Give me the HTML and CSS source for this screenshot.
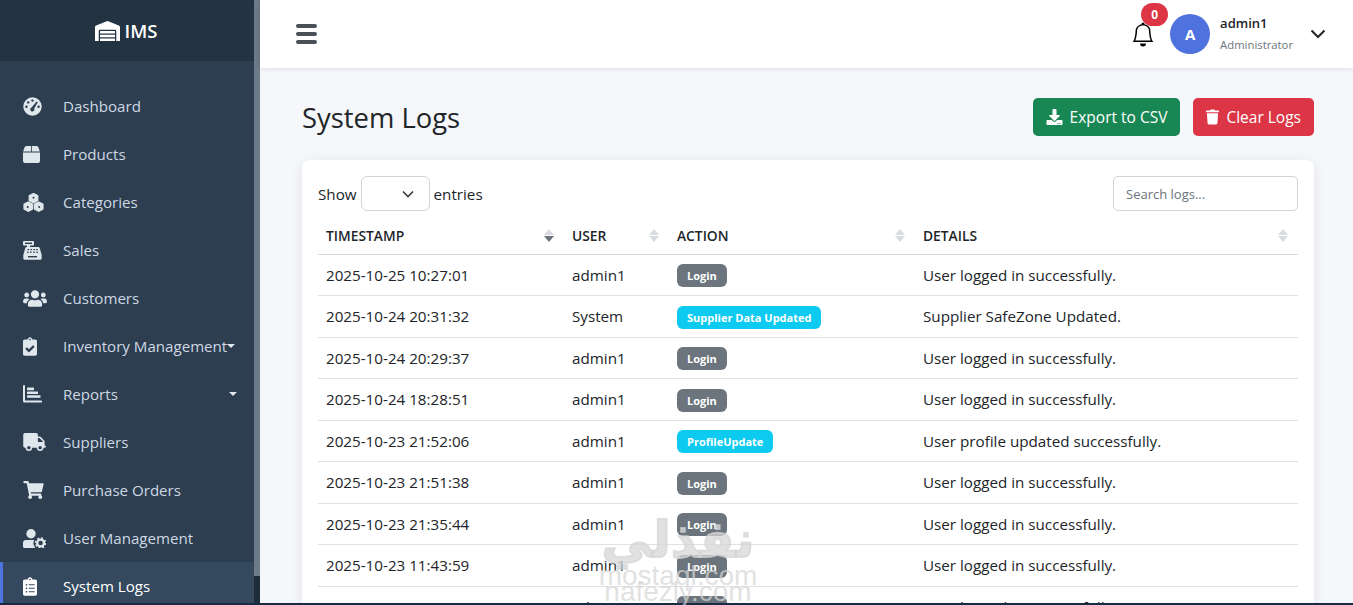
FILE: index.html
```html
<!DOCTYPE html>
<html lang="en">
<head>
  <meta charset="UTF-8">
  <title>System Logs - IMS</title>
  <link rel="stylesheet" href="styles.css">
</head>
<body>

  <div class="app">
    <aside class="sidebar">
      <div class="sidebar-inner">
        <div class="brand">
          <svg class="brand-icon" viewBox="0 0 640 512"><path d="M504 352H136.4c-4.4 0-8 3.6-8 8l-.1 48c0 4.4 3.6 8 8 8H504c4.4 0 8-3.6 8-8v-48c0-4.4-3.6-8-8-8zm0 96H136.1c-4.4 0-8 3.6-8 8l-.1 48c0 4.4 3.6 8 8 8h368c4.4 0 8-3.6 8-8v-48c0-4.4-3.6-8-8-8zm0-192H136.6c-4.4 0-8 3.6-8 8l-.1 48c0 4.4 3.6 8 8 8H504c4.4 0 8-3.6 8-8v-48c0-4.4-3.6-8-8-8zm106.5-139L338.4 3.7a48.15 48.15 0 0 0-36.9 0L29.5 117C11.7 124.5 0 141.9 0 161.3V504c0 4.4 3.6 8 8 8h80c4.4 0 8-3.6 8-8V256c0-17.6 14.6-32 32.6-32h382.8c18 0 32.6 14.4 32.6 32v248c0 4.4 3.6 8 8 8h80c4.4 0 8-3.6 8-8V161.3c0-19.4-11.7-36.8-29.5-44.3z"/></svg>
          <span>IMS</span>
        </div>
        <nav class="side-nav">
          <a href="#" class="nav-link">
            <span class="nav-icon"><svg width="19" height="19" viewBox="0 0 19 19"><circle cx="9.5" cy="9.5" r="9.2"/><g fill="#2c3e50"><circle cx="9.5" cy="3.6" r="1.2"/><circle cx="5.2" cy="5.4" r="1.2"/><circle cx="3.4" cy="9.7" r="1.2"/><circle cx="15.6" cy="9.7" r="1.2"/><path d="M13.6 4.4l1.2.8-3.6 6.2a2.1 2.1 0 1 1-2.6-1z"/></g></svg></span>
            Dashboard
          </a>
          <a href="#" class="nav-link">
            <span class="nav-icon"><svg width="17" height="17" viewBox="0 0 17 17"><path d="M3.2 0h4.9v5.6H.1L1.5 1.4A2 2 0 0 1 3.2 0zM8.9 0h4.9a2 2 0 0 1 1.7 1.4l1.4 4.2H8.9zM0 6.4h17v8.5a2 2 0 0 1-2 2H2a2 2 0 0 1-2-2z"/></svg></span>
            Products
          </a>
          <a href="#" class="nav-link">
            <span class="nav-icon"><svg width="21" height="19" viewBox="0 0 21 19"><g stroke="#dfe6ec" stroke-width="2" stroke-linejoin="round"><path d="M10.5 1l3.9 2v4.400l-3.900 2-3.900-2V3z"/><path d="M5.300 9.400l3.900 2v4.400l-3.900 2.200-3.900-2.200v-4.400z"/><path d="M15.700 9.400l3.900 2v4.400l-3.900 2.200-3.900-2.200v-4.400z"/></g><g fill="#2c3e50"><circle cx="10.500" cy="4.800" r="1"/><circle cx="4.700" cy="14" r="1"/><circle cx="16.200" cy="14" r="1"/></g></svg></span>
            Categories
          </a>
          <a href="#" class="nav-link">
            <span class="nav-icon"><svg width="19" height="19" viewBox="0 0 19 19"><path d="M1 0h9a1 1 0 0 1 1 1v2.600a1 1 0 0 1-1 1H7V6h8.200a1.600 1.600 0 0 1 1.600 1.300L18.700 14v3.200a1.600 1.600 0 0 1-1.600 1.600H1.900a1.600 1.600 0 0 1-1.600-1.600V14L2.200 7.300A1.600 1.600 0 0 1 3.800 6H4V4.600H1a1 1 0 0 1-1-1V1a1 1 0 0 1 1-1z"/><g fill="#2c3e50"><rect x="2" y="1.600" width="7" height="1.400"/><rect x="4.500" y="8" width="1.600" height="1.200"/><rect x="7.500" y="8" width="1.600" height="1.200"/><rect x="10.500" y="8" width="1.600" height="1.200"/><rect x="13.200" y="8" width="1.600" height="1.200"/><rect x="4" y="10.600" width="1.600" height="1.200"/><rect x="7" y="10.600" width="1.600" height="1.200"/><rect x="10.200" y="10.600" width="1.600" height="1.200"/><rect x="13.400" y="10.600" width="1.600" height="1.200"/><rect x="5" y="15" width="9" height="1.400"/></g></svg></span>
            Sales
          </a>
          <a href="#" class="nav-link">
            <span class="nav-icon"><svg width="24" height="19" viewBox="0 0 640 512"><path d="M96 224c35.300 0 64-28.700 64-64s-28.700-64-64-64-64 28.700-64 64 28.700 64 64 64zm448 0c35.300 0 64-28.700 64-64s-28.700-64-64-64-64 28.700-64 64 28.700 64 64 64zm32 32h-64c-17.600 0-33.500 7.100-45.100 18.600 40.300 22.100 68.900 62 75.100 109.400h66c17.700 0 32-14.300 32-32v-32c0-35.300-28.700-64-64-64zm-256 0c61.900 0 112-50.100 112-112S381.900 32 320 32 208 82.100 208 144s50.100 112 112 112zm76.800 32h-8.300c-20.800 10-43.900 16-68.500 16s-47.600-6-68.500-16h-8.300C179.600 288 128 339.600 128 403.200V432c0 26.500 21.500 48 48 48h288c26.500 0 48-21.500 48-48v-28.800c0-63.600-51.600-115.200-115.200-115.200zm-223.700-13.400C161.500 263.100 145.600 256 128 256H64c-35.300 0-64 28.700-64 64v32c0 17.700 14.300 32 32 32h65.900c6.300-47.400 34.900-87.300 75.200-109.400z"/></svg></span>
            Customers
          </a>
          <a href="#" class="nav-link">
            <span class="nav-icon"><svg width="14" height="19" viewBox="0 0 384 512"><path d="M336 64h-80c0-35.300-28.700-64-64-64s-64 28.700-64 64H48C21.500 64 0 85.500 0 112v352c0 26.500 21.500 48 48 48h288c26.500 0 48-21.500 48-48V112c0-26.500-21.500-48-48-48zM192 40c13.300 0 24 10.700 24 24s-10.700 24-24 24-24-10.700-24-24 10.700-24 24-24zm121.200 231.800l-143 141.800c-4.700 4.700-12.300 4.600-17-.1l-82.600-83.300c-4.700-4.700-4.600-12.300.1-17L99.100 285c4.700-4.700 12.300-4.600 17 .1l46 46.400 106-105.200c4.700-4.700 12.300-4.600 17 .1l28.200 28.400c4.700 4.800 4.600 12.300-.1 17z"/></svg></span>
            Inventory Management<span class="caret caret-tight"></span>
          </a>
          <a href="#" class="nav-link">
            <span class="nav-icon"><svg width="19" height="18" viewBox="0 0 19 18"><path d="M0 1a1 1 0 0 1 2 0v14.400h16a1.100 1.100 0 0 1 0 2.200H1.600A1.600 1.600 0 0 1 0 16z"/><rect x="4" y="2.600" width="7" height="2.600" rx=".6"/><rect x="4" y="6.400" width="11" height="2.600" rx=".6"/><rect x="4" y="10.200" width="13.500" height="2.600" rx=".6"/></svg></span>
            Reports<span class="caret"></span>
          </a>
          <a href="#" class="nav-link">
            <span class="nav-icon"><svg width="23" height="18" viewBox="0 0 640 512"><path d="M624 352h-16V243.900c0-12.700-5.100-24.900-14.100-33.900L494 110.100c-9-9-21.200-14.100-33.900-14.100H416V48c0-26.500-21.500-48-48-48H48C21.500 0 0 21.500 0 48v320c0 26.500 21.500 48 48 48h16c0 53 43 96 96 96s96-43 96-96h128c0 53 43 96 96 96s96-43 96-96h48c8.800 0 16-7.200 16-16v-32c0-8.800-7.200-16-16-16zM160 464c-26.500 0-48-21.500-48-48s21.500-48 48-48 48 21.500 48 48-21.500 48-48 48zm320 0c-26.500 0-48-21.500-48-48s21.500-48 48-48 48 21.500 48 48-21.500 48-48 48zm80-208H416V144h44.100l99.900 99.900V256z"/></svg></span>
            Suppliers
          </a>
          <a href="#" class="nav-link">
            <span class="nav-icon"><svg width="21" height="18" viewBox="0 0 576 512"><path d="M528.120 301.319l47.273-208C578.806 78.301 567.391 64 551.990 64H159.208l-9.166-44.810C147.758 8.021 137.930 0 126.529 0H24C10.745 0 0 10.745 0 24v16c0 13.255 10.745 24 24 24h69.883l70.248 343.435C147.325 417.100 136 435.222 136 456c0 30.928 25.072 56 56 56s56-25.072 56-56c0-15.674-6.447-29.835-16.824-40h209.647C430.447 426.165 424 440.326 424 456c0 30.928 25.072 56 56 56s56-25.072 56-56c0-22.172-12.888-41.332-31.579-50.405l5.517-24.276c3.413-15.018-8.002-29.319-23.403-29.319H218.117l-6.545-32h293.145c11.206 0 20.920-7.754 23.403-18.681z"/></svg></span>
            Purchase Orders
          </a>
          <a href="#" class="nav-link">
            <span class="nav-icon"><svg width="23" height="19" viewBox="0 0 23 19"><circle cx="8" cy="4.700" r="4.700"/><path d="M3 11h8.200a7 7 0 0 0 1 7.600l-.2.4H1.600A1.600 1.600 0 0 1 0 17.400V14a3 3 0 0 1 3-3z"/><circle cx="17.600" cy="14" r="3.400" fill="none" stroke="#dfe6ec" stroke-width="2.400"/><circle cx="17.600" cy="14" r="5" fill="none" stroke="#dfe6ec" stroke-width="1.600" stroke-dasharray="2 1.900"/></svg></span>
            User Management
          </a>
          <a href="#" class="nav-link active">
            <span class="nav-icon"><svg width="14" height="19" viewBox="0 0 384 512"><path d="M336 64h-80c0-35.300-28.700-64-64-64s-64 28.700-64 64H48C21.500 64 0 85.500 0 112v352c0 26.500 21.500 48 48 48h288c26.500 0 48-21.500 48-48V112c0-26.500-21.500-48-48-48zM96 424c-13.300 0-24-10.700-24-24s10.700-24 24-24 24 10.700 24 24-10.700 24-24 24zm0-96c-13.300 0-24-10.700-24-24s10.700-24 24-24 24 10.700 24 24-10.700 24-24 24zm0-96c-13.300 0-24-10.700-24-24s10.700-24 24-24 24 10.700 24 24-10.700 24-24 24zm96-192c13.300 0 24 10.700 24 24s-10.700 24-24 24-24-10.700-24-24 10.700-24 24-24zm128 368c0 4.400-3.600 8-8 8H168c-4.400 0-8-3.600-8-8v-16c0-4.400 3.600-8 8-8h144c4.400 0 8 3.600 8 8v16zm0-96c0 4.400-3.600 8-8 8H168c-4.400 0-8-3.600-8-8v-16c0-4.400 3.600-8 8-8h144c4.400 0 8 3.600 8 8v16zm0-96c0 4.400-3.600 8-8 8H168c-4.400 0-8-3.600-8-8v-16c0-4.400 3.600-8 8-8h144c4.400 0 8 3.600 8 8v16z"/></svg></span>
            System Logs
          </a>
        </nav>
      </div>
      <div class="side-scroll"><div class="side-thumb"></div></div>
    </aside>

    <div class="main">
      <header class="topbar">
        <button class="menu-toggle"><span></span><span></span><span></span></button>
        <div class="topbar-right">
          <div class="bell">
            <svg width="24" height="25" viewBox="0 0 16 16"><path d="M8 16a2 2 0 0 0 2-2H6a2 2 0 0 0 2 2zM8 1.918l-.797.161A4.002 4.002 0 0 0 4 6c0 .628-.134 2.197-.459 3.742-.16.767-.376 1.566-.663 2.258h10.244c-.287-.692-.502-1.490-.663-2.258C12.134 8.197 12 6.628 12 6a4.002 4.002 0 0 0-3.203-3.920L8 1.917zM14.220 12c.223.447.481.801.78 1H1c.299-.199.557-.553.78-1C2.680 10.200 3 6.880 3 6c0-2.420 1.720-4.440 4.005-4.901a1 1 0 1 1 1.990 0A5.002 5.002 0 0 1 13 6c0 .880.320 4.200 1.220 6z"/></svg>
            <span class="bell-badge">0</span>
          </div>
          <div class="avatar">A</div>
          <div class="user-info">
            <div class="user-name">admin1</div>
            <div class="user-role">Administrator</div>
          </div>
          <svg class="user-chevron" width="16" height="10" viewBox="0 0 16 10"><path d="M1.500 1.500L8 8l6.500-6.500" fill="none" stroke="#212529" stroke-width="2"/></svg>
        </div>
      </header>

      <div class="content">
        <div class="page-head">
          <h1>System Logs</h1>
          <div class="page-actions">
            <button class="btn btn-green">
              <svg width="17" height="16" viewBox="0 0 512 512"><path d="M216 0h80c13.300 0 24 10.700 24 24v168h87.700c17.800 0 26.700 21.500 14.100 34.100L269.700 378.300c-7.500 7.500-19.800 7.500-27.300 0L90.100 226.100c-12.600-12.600-3.700-34.100 14.100-34.100H192V24c0-13.300 10.700-24 24-24zm296 376v112c0 13.300-10.700 24-24 24H24c-13.300 0-24-10.700-24-24V376c0-13.300 10.700-24 24-24h146.700l49 49c20.100 20.100 52.500 20.100 72.600 0l49-49H488c13.300 0 24 10.700 24 24zm-124 88c0-11-9-20-20-20s-20 9-20 20 9 20 20 20 20-9 20-20zm64 0c0-11-9-20-20-20s-20 9-20 20 9 20 20 20 20-9 20-20z"/></svg>
              Export to CSV
            </button>
            <button class="btn btn-red">
              <svg width="13" height="16" viewBox="0 0 448 512"><path d="M432 32H312l-9.400-18.700A24 24 0 0 0 281.100 0H166.800a23.720 23.720 0 0 0-21.400 13.300L136 32H16A16 16 0 0 0 0 48v32a16 16 0 0 0 16 16h416a16 16 0 0 0 16-16V48a16 16 0 0 0-16-16zM53.200 467a48 48 0 0 0 47.900 45h245.800a48 48 0 0 0 47.900-45L416 128H32z"/></svg>
              Clear Logs
            </button>
          </div>
        </div>

        <div class="card">
          <div class="table-tools">
            <div class="show-entries">
              Show
              <div class="entries-select"><svg width="12" height="8" viewBox="0 0 12 8"><path d="M1 1.500l5 5 5-5" fill="none" stroke="#343a40" stroke-width="1.600"/></svg></div>
              entries
            </div>
            <input class="search" type="text" placeholder="Search logs...">
          </div>

          <table class="log-table">
            <colgroup>
              <col class="col-time"><col class="col-user"><col class="col-action"><col>
            </colgroup>
            <thead>
              <tr>
                <th><div class="th-wrap">Timestamp<span class="sort sort-down"></span></div></th>
                <th><div class="th-wrap">User<span class="sort"></span></div></th>
                <th><div class="th-wrap">Action<span class="sort"></span></div></th>
                <th><div class="th-wrap">Details<span class="sort"></span></div></th>
              </tr>
            </thead>
            <tbody>
              <tr><td>2025-10-25 10:27:01</td><td>admin1</td><td><span class="badge badge-grey">Login</span></td><td>User logged in successfully.</td></tr>
              <tr><td>2025-10-24 20:31:32</td><td>System</td><td><span class="badge badge-cyan">Supplier Data Updated</span></td><td>Supplier SafeZone Updated.</td></tr>
              <tr><td>2025-10-24 20:29:37</td><td>admin1</td><td><span class="badge badge-grey">Login</span></td><td>User logged in successfully.</td></tr>
              <tr><td>2025-10-24 18:28:51</td><td>admin1</td><td><span class="badge badge-grey">Login</span></td><td>User logged in successfully.</td></tr>
              <tr><td>2025-10-23 21:52:06</td><td>admin1</td><td><span class="badge badge-cyan">ProfileUpdate</span></td><td>User profile updated successfully.</td></tr>
              <tr><td>2025-10-23 21:51:38</td><td>admin1</td><td><span class="badge badge-grey">Login</span></td><td>User logged in successfully.</td></tr>
              <tr><td>2025-10-23 21:35:44</td><td>admin1</td><td><span class="badge badge-grey">Login</span></td><td>User logged in successfully.</td></tr>
              <tr><td>2025-10-23 11:43:59</td><td>admin1</td><td><span class="badge badge-grey">Login</span></td><td>User logged in successfully.</td></tr>
              <tr><td>2025-10-23 11:42:53</td><td>admin1</td><td><span class="badge badge-grey">Login</span></td><td>User logged in successfully.</td></tr>
            </tbody>
          </table>
        </div>
      </div>
    </div>
  </div>
  <div class="bottom-line"></div>

  <div class="watermark">
    <div class="wm-arabic">نفذلي</div>
    <div class="wm-line">mostaql.com</div>
    <div class="wm-line wm-line2">nafezly.com</div>
  </div>

</body>
</html>
```

FILE: styles.css
```css
* {
  margin: 0;
  padding: 0;
  box-sizing: border-box;
}

body {
  height: 605px;
  overflow: hidden;
  background-color: #f5f7fa;
  color: #212529;
  font-family: "Open Sans", "Liberation Sans", sans-serif;
  font-size: 15.2px;
  display: flex;
  flex-direction: column;
}

.app {
  display: flex;
  height: 603px;
  overflow: hidden;
}

.bottom-line {
  height: 2px;
  background-color: #1b2a44;
}

/* sidebar */
.sidebar {
  width: 260px;
  flex-shrink: 0;
  display: flex;
  background-color: #2c3e50;
}

.sidebar-inner {
  flex: 1;
  min-width: 0;
  overflow: hidden;
}

.side-scroll {
  width: 6px;
  background-color: #1f2d3a;
}

.side-thumb {
  height: 576px;
  background-color: #6c7a89;
}

.brand {
  height: 61px;
  background-color: #233342;
  color: #fff;
  display: flex;
  justify-content: center;
  align-items: center;
  gap: 5px;
  font-size: 18.5px;
  font-weight: 600;
  padding-right: 2px;
}

.brand-icon {
  width: 25px;
  height: 20px;
  fill: #fff;
}

.side-nav {
  padding-top: 21px;
}

.nav-link {
  height: 48px;
  display: flex;
  align-items: center;
  padding-left: 23px;
  color: #cfd8e3;
  font-size: 15.1px;
  text-decoration: none;
  white-space: nowrap;
}

.nav-link.active {
  background-color: #34495e;
  color: #fff;
  border-left: 3px solid #4e73df;
  padding-left: 20px;
}

.nav-icon {
  width: 40px;
  flex-shrink: 0;
  display: flex;
  align-items: center;
}

.nav-icon svg {
  fill: #dfe6ec;
}

.active .nav-icon svg {
  fill: #fff;
}

.caret {
  width: 0;
  height: 0;
  margin-left: auto;
  margin-right: 17px;
  border-left: 4.5px solid transparent;
  border-right: 4.5px solid transparent;
  border-top: 4.5px solid #dfe6ec;
}

.caret-tight {
  margin-left: 0;
}

/* top bar */
.main {
  flex: 1;
  min-width: 0;
}

.topbar {
  height: 68px;
  background-color: #fff;
  box-shadow: 0 1px 5px rgba(0, 0, 0, 0.1);
  display: flex;
  justify-content: space-between;
  align-items: center;
  padding: 0 27px 0 36px;
  position: relative;
}

.menu-toggle {
  width: 21px;
  border: none;
  background: none;
  display: flex;
  flex-direction: column;
  gap: 4.5px;
}

.menu-toggle span {
  height: 3.5px;
  border-radius: 2px;
  background-color: #495057;
}

.topbar-right {
  display: flex;
  align-items: center;
}

.bell {
  position: relative;
  width: 24px;
  height: 25px;
  margin-right: 15px;
}

.bell-badge {
  position: absolute;
  top: -19px;
  left: 10px;
  width: 27px;
  height: 23px;
  border-radius: 12px;
  background-color: #dc3545;
  color: #fff;
  font-size: 12px;
  font-weight: 700;
  text-align: center;
  line-height: 23px;
}

.avatar {
  width: 40px;
  height: 40px;
  border-radius: 50%;
  background-color: #4e73df;
  color: #fff;
  font-size: 15px;
  font-weight: 700;
  display: flex;
  justify-content: center;
  align-items: center;
  margin-right: 10px;
}

.user-name {
  font-size: 13px;
  font-weight: 600;
  line-height: 21px;
}

.user-role {
  font-size: 11.3px;
  color: #6c757d;
  line-height: 21px;
}

.user-chevron {
  margin-left: 17px;
}

/* page content */
.content {
  padding: 30px 39px 0 42px;
}

.page-head {
  display: flex;
  justify-content: space-between;
  align-items: center;
  margin-bottom: 24px;
}

.page-head h1 {
  font-size: 27.4px;
  font-weight: 500;
}

.page-actions {
  display: flex;
  gap: 13px;
}

.btn {
  height: 38px;
  padding: 0 13px;
  border: none;
  border-radius: 5px;
  color: #fff;
  font-family: inherit;
  font-size: 15.5px;
  display: flex;
  align-items: center;
  gap: 7px;
}

.btn svg {
  fill: #fff;
}

.btn-green {
  background-color: #198754;
}

.btn-red {
  background-color: #dc3545;
}

.card {
  background-color: #fff;
  border-radius: 8px;
  box-shadow: 0 2px 14px rgba(0, 0, 0, 0.08);
  padding: 16px;
}

.table-tools {
  display: flex;
  justify-content: space-between;
  align-items: center;
  margin-bottom: 7px;
}

.show-entries {
  display: flex;
  align-items: center;
  gap: 4px;
}

.entries-select {
  width: 69px;
  height: 35px;
  border: 1px solid #ced4da;
  border-radius: 6px;
  display: flex;
  justify-content: flex-end;
  align-items: center;
  padding-right: 15px;
}

.search {
  width: 185px;
  height: 35px;
  border: 1px solid #ced4da;
  border-radius: 5px;
  padding: 0 12px;
  font-family: inherit;
  font-size: 13px;
}

.search::placeholder {
  color: #6c757d;
}

.log-table {
  width: 100%;
  table-layout: fixed;
  border-collapse: collapse;
}

.col-time {
  width: 246px;
}

.col-user {
  width: 105px;
}

.col-action {
  width: 246px;
}

.log-table th {
  height: 36px;
  padding: 0 8px;
  border-bottom: 1px solid #d5d9dd;
  font-size: 13.8px;
  font-weight: 600;
  text-transform: uppercase;
  text-align: left;
}

.th-wrap {
  display: flex;
  justify-content: space-between;
  align-items: center;
}

.sort {
  width: 10px;
  margin-right: 2px;
  display: flex;
  flex-direction: column;
  align-items: center;
  gap: 1px;
}

.sort::before,
.sort::after {
  content: "";
  width: 0;
  height: 0;
  border-left: 5px solid transparent;
  border-right: 5px solid transparent;
}

.sort::before {
  border-bottom: 6.5px solid #d8dce0;
}

.sort::after {
  border-top: 6.5px solid #d8dce0;
}

.sort-down::after {
  border-top-color: #6c757d;
}

.log-table td {
  height: 41.5px;
  padding: 0 8px;
  border-bottom: 1px solid #dee2e6;
  white-space: nowrap;
}

.badge {
  display: inline-block;
  height: 23px;
  margin-top: 2px;
  padding: 0 10px;
  border-radius: 6px;
  color: #fff;
  font-size: 11px;
  font-weight: 700;
  line-height: 23px;
  vertical-align: middle;
}

.badge-grey {
  background-color: #6c757d;
}

.badge-cyan {
  background-color: #0dcaf0;
}

/* stock site mark laid over the table */
.watermark {
  position: absolute;
  left: 590px;
  top: 512px;
  width: 176px;
  text-align: center;
  color: rgba(214, 214, 214, 0.72);
  pointer-events: none;
}

.wm-arabic {
  font-family: "DejaVu Sans", sans-serif;
  font-size: 50px;
  font-weight: 700;
  line-height: 56px;
  white-space: nowrap;
  -webkit-text-stroke: 2px rgba(214, 214, 214, 0.72);
}

.wm-line {
  font-family: "Liberation Sans", sans-serif;
  font-size: 28px;
  line-height: 16px;
  white-space: nowrap;
}

.wm-line2 {
  line-height: 16px;
}
```
